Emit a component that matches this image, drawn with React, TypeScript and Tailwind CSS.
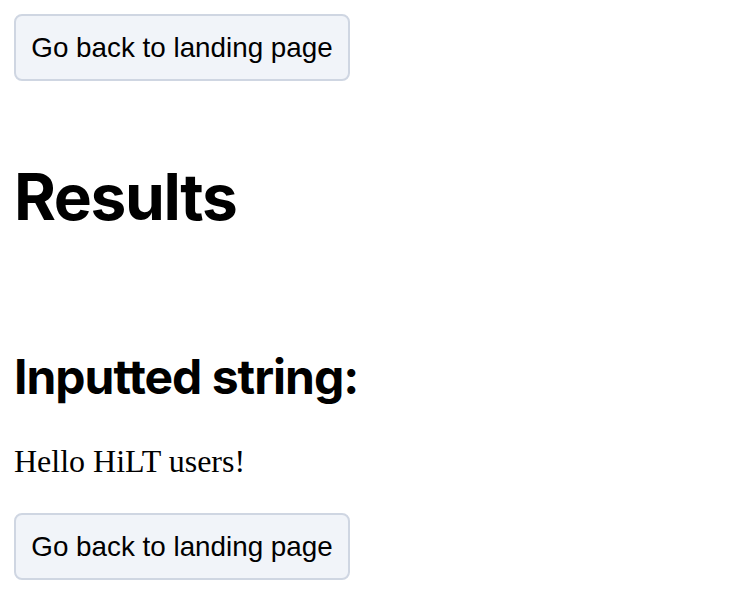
import React from "react";

function BackButton() {
  return (
    <button
      type="button"
      className="box-border flex h-[67px] w-[336px] items-center justify-center rounded-[8px] border-2 border-[#cfd6e2] bg-[#f1f4f9] font-['Liberation_Sans',Arial,sans-serif] text-[27.8px] leading-none text-black"
    >
      Go back to landing page
    </button>
  );
}

export default function App() {
  return (
    <div className="flex min-h-[614px] w-full flex-col items-start bg-white px-[14px] pt-[14px]">
      <BackButton />
      <h1 className="mt-[84px] font-['Inter',sans-serif] text-[64px] font-bold leading-[64px] tracking-[-1.4px] text-black">
        Results
      </h1>
      <h2 className="mt-[124px] font-['Inter',sans-serif] text-[48px] font-bold leading-[48px] tracking-[-1px] text-black">
        Inputted string:
      </h2>
      <p className="mt-[44px] font-['Liberation_Serif','Times_New_Roman',serif] text-[32px] leading-[32px] text-black">
        Hello HiLT users!
      </p>
      <div className="mt-[36px]">
        <BackButton />
      </div>
    </div>
  );
}
